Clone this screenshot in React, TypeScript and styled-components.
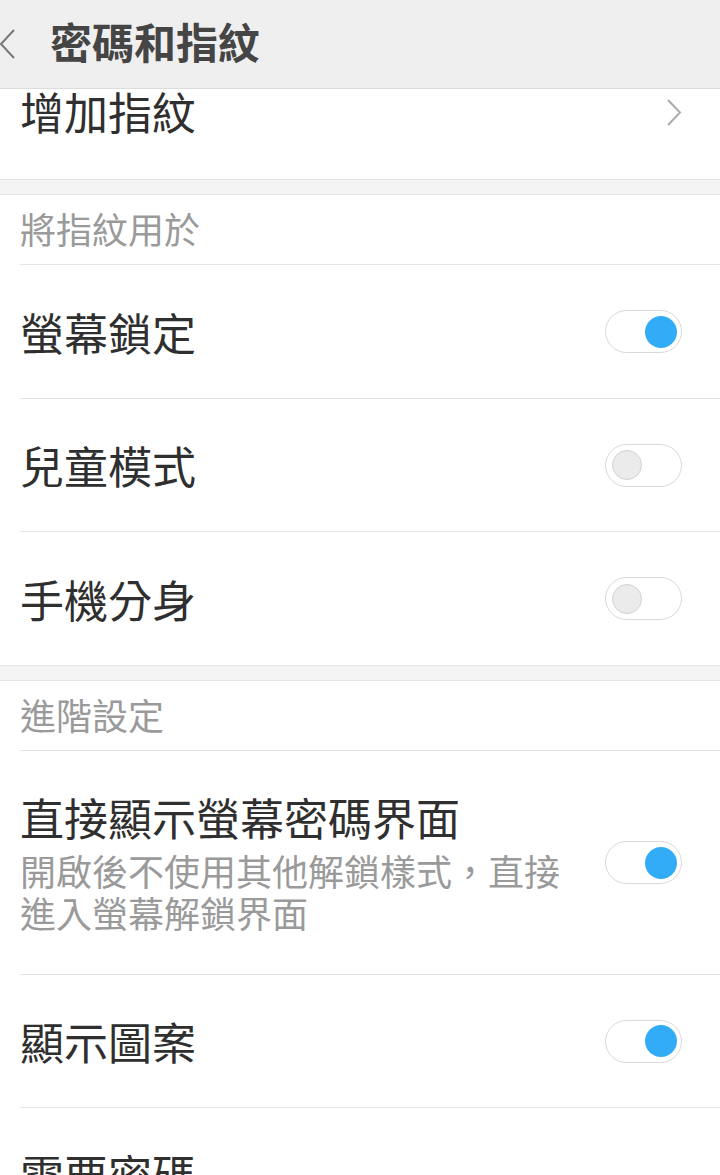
import React from "react";
import styled, { createGlobalStyle } from "styled-components";

const Global = createGlobalStyle`
  html, body { margin: 0; padding: 0; background: #ffffff; }
  body { width: 720px; height: 1175px; overflow: hidden; font-family: "Noto Sans CJK TC", "Noto Sans", sans-serif; }
`;

const Page = styled.div`
  width: 720px;
  height: 1175px;
  overflow: hidden;
  background: #fff;
  display: flex;
  flex-direction: column;
`;

const Header = styled.header`
  height: 88px;
  flex: none;
  background: #efefef;
  border-bottom: 1px solid #dcdcdc;
  display: flex;
  align-items: center;
  box-sizing: content-box;
`;

const BackBtn = styled.div`
  width: 50px;
  height: 88px;
  display: flex;
  align-items: center;
`;

const Title = styled.h1`
  margin: 0 0 6px 0;
  font-size: 42px;
  font-weight: 700;
  color: #454545;
  line-height: 50px;
`;

const TopRow = styled.div`
  height: 90px;
  flex: none;
  display: flex;
  align-items: flex-start;
  justify-content: space-between;
  padding: 0 38px 0 20px;
`;

const TopLabel = styled.div`
  font-size: 44px;
  line-height: 50px;
  color: #2f2f2f;
  margin-top: -3px;
`;

const Gap = styled.div`
  height: 14px;
  flex: none;
  background: #f4f4f4;
  border-top: 1px solid #e6e6e6;
  border-bottom: 1px solid #e6e6e6;
`;

const SectionHead = styled.div`
  height: 70px;
  flex: none;
  margin-left: 20px;
  border-bottom: 1px solid #e4e4e4;
  display: flex;
  align-items: center;
  font-size: 36px;
  line-height: 42px;
  color: #9a9a9a;
  padding-bottom: 4px;
  box-sizing: border-box;
`;

const Row = styled.div<{ $h: number; $last?: boolean }>`
  height: ${(p) => p.$h}px;
  flex: none;
  box-sizing: border-box;
  margin-left: 20px;
  padding-right: 38px;
  border-bottom: ${(p) => (p.$last ? "none" : "1px solid #e4e4e4")};
  display: flex;
  align-items: center;
  justify-content: space-between;
`;

const TextCol = styled.div`
  display: flex;
  flex-direction: column;
  gap: 7px;
`;

const Label = styled.div`
  font-size: 44px;
  line-height: 50px;
  color: #2f2f2f;
`;

const Sub = styled.div`
  font-size: 36px;
  line-height: 42px;
  color: #9a9a9a;
  width: 545px;
`;

const Switch = styled.div<{ $on: boolean }>`
  width: 77px;
  height: 43px;
  flex: none;
  box-sizing: border-box;
  border: 1px solid #d9d9d9;
  border-radius: 22px;
  background: #fff;
  display: flex;
  align-items: center;
  justify-content: ${(p) => (p.$on ? "flex-end" : "flex-start")};
  padding: ${(p) => (p.$on ? "0 4px 0 0" : "0 0 0 6px")};
`;

const Knob = styled.div<{ $on: boolean }>`
  width: ${(p) => (p.$on ? 32 : 30)}px;
  height: ${(p) => (p.$on ? 32 : 30)}px;
  border-radius: 50%;
  box-sizing: border-box;
  background: ${(p) => (p.$on ? "#33acf8" : "#ebebeb")};
  border: ${(p) => (p.$on ? "none" : "1px solid #d2d2d2")};
`;

const Chevron = styled.svg`
  margin-top: 10px;
  flex: none;
`;

const Toggle = ({ on }: { on: boolean }) => (
  <Switch $on={on}>
    <Knob $on={on} />
  </Switch>
);

export default function App() {
  return (
    <Page>
      <Global />
      <Header>
        <BackBtn>
          <svg width="16" height="30" viewBox="0 0 16 30">
            <polyline points="14,1 1,15 14,29" fill="none" stroke="#7a7a7a" strokeWidth="2" />
          </svg>
        </BackBtn>
        <Title>密碼和指紋</Title>
      </Header>
      <TopRow>
        <TopLabel>增加指紋</TopLabel>
        <Chevron width="16" height="28" viewBox="0 0 16 28">
          <polyline points="2,1 14,13.5 2,26" fill="none" stroke="#ababab" strokeWidth="2" />
        </Chevron>
      </TopRow>
      <Gap />
      <SectionHead>將指紋用於</SectionHead>
      <Row $h={134}>
        <Label>螢幕鎖定</Label>
        <Toggle on={true} />
      </Row>
      <Row $h={133}>
        <Label>兒童模式</Label>
        <Toggle on={false} />
      </Row>
      <Row $h={133} $last>
        <Label>手機分身</Label>
        <Toggle on={false} />
      </Row>
      <Gap />
      <SectionHead>進階設定</SectionHead>
      <Row $h={224}>
        <TextCol>
          <Label>直接顯示螢幕密碼界面</Label>
          <Sub>開啟後不使用其他解鎖樣式，直接進入螢幕解鎖界面</Sub>
        </TextCol>
        <Toggle on={true} />
      </Row>
      <Row $h={133}>
        <Label>顯示圖案</Label>
        <Toggle on={true} />
      </Row>
      <Row $h={133}>
        <Label>需要密碼</Label>
      </Row>
    </Page>
  );
}
